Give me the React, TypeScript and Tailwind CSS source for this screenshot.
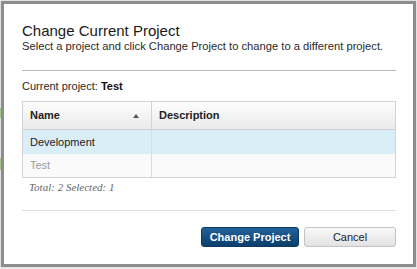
import React from "react";

const rows = [
  { name: "Development", description: "", selected: true },
  { name: "Test", description: "", selected: false },
];

function SortArrow() {
  return (
    <svg width="6" height="4" viewBox="0 0 6 4" className="text-[#555]">
      <path d="M3 0L6 4H0z" fill="currentColor" />
    </svg>
  );
}

export default function App() {
  return (
    <div className="flex h-[269px] w-[417px] bg-[#f0f0f0] font-['Liberation_Sans',Arial,sans-serif]">
      {/* bits of the page behind the dialog */}
      <div className="flex w-px flex-col pt-[108px]">
        <div className="h-[10px] bg-[#9fcf8a]" />
        <div className="h-[40px]" />
        <div className="h-[12px] bg-[#9fcf8a]" />
      </div>

      <div className="mt-px flex h-[266px] w-[415px] flex-col border-[3px] border-[#8d8d8d] bg-white pl-[18px] pr-[17px] pt-[18px] shadow-[0_0_1px_#999]">
        <h1 className="text-[15px] leading-[17px] text-[#1a1a1a]">Change Current Project</h1>
        <p className="text-[11.2px] leading-[14px] text-[#2a2a2a]">
          Select a project and click Change Project to change to a different project.
        </p>

        <div className="mt-[17px] h-px bg-[#b9b9b9]" />

        <p className="mt-[8px] text-[11px] leading-[14px] text-[#2a2a2a]">
          Current project: <span className="font-bold text-[#111]">Test</span>
        </p>

        {/* project table */}
        <div className="mt-[8px] border border-[#d3d3d3] text-[11px]">
          <div className="flex h-[28px] border-b border-[#cfcfcf] bg-gradient-to-b from-[#fdfdfd] to-[#ebebeb] font-bold text-[#222]">
            <div className="flex w-[129px] items-center justify-between border-r border-[#d3d3d3] pl-[7px] pr-[12px]">
              <span>Name</span>
              <SortArrow />
            </div>
            <div className="flex flex-1 items-center pl-[7px]">Description</div>
          </div>
          {rows.map((row) => (
            <div
              key={row.name}
              className={
                row.selected
                  ? "flex h-[24px] bg-[#daeef8] text-[#222]"
                  : "flex h-[23px] bg-[#fafafa] text-[#9a9a9a]"
              }
            >
              <div className="flex w-[129px] items-center border-r border-[#dcdcdc] pl-[7px]">{row.name}</div>
              <div className="flex flex-1 items-center pl-[7px]">{row.description}</div>
            </div>
          ))}
        </div>

        <p className="mt-[2px] pl-[7px] font-['Liberation_Serif',Georgia,serif] text-[11px] italic leading-[14px] text-[#666]">
          Total: 2 Selected: 1
        </p>

        <div className="mt-[16px] h-px bg-[#dedede]" />

        <div className="mt-[16px] flex justify-end gap-[5px] text-[11px]">
          <button className="h-[20px] w-[98px] rounded-[3px] border border-[#0c3960] bg-gradient-to-b from-[#22629a] to-[#0b3e6c] font-bold text-white">
            Change Project
          </button>
          <button className="h-[20px] w-[92px] rounded-[3px] border border-[#c3c3c3] bg-gradient-to-b from-[#f9f9f9] to-[#e2e2e2] text-[#222]">
            Cancel
          </button>
        </div>
      </div>
    </div>
  );
}
